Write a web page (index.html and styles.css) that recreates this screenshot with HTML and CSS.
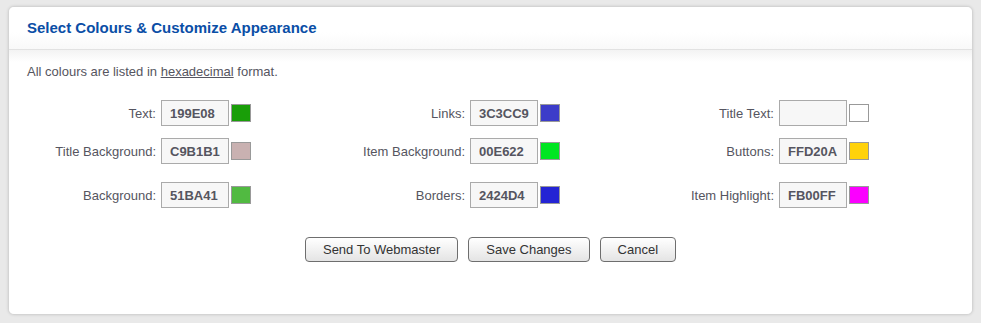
FILE: index.html
```html
<!DOCTYPE html>
<html lang="en">
<head>
    <meta charset="UTF-8">
    <meta name="viewport" content="width=device-width, initial-scale=1.0">
    <title>Select Colours &amp; Customize Appearance</title>
    <link rel="stylesheet" href="styles.css">
</head>
<body>
    <div class="panel">
        <div class="panel-header">
            <h1>Select Colours &amp; Customize Appearance</h1>
        </div>

        <div class="panel-body">
            <p class="note">All colours are listed in <a href="#">hexadecimal</a> format.</p>

            <div class="field-row">
                <div class="field">
                    <label for="textColour">Text:</label>
                    <input type="text" id="textColour" value="199E08">
                    <span class="swatch" style="background-color: #199E08;"></span>
                </div>
                <div class="field">
                    <label for="linkColour">Links:</label>
                    <input type="text" id="linkColour" value="3C3CC9">
                    <span class="swatch" style="background-color: #3C3CC9;"></span>
                </div>
                <div class="field">
                    <label for="titleTextColour">Title Text:</label>
                    <input type="text" id="titleTextColour" value="">
                    <span class="swatch" style="background-color: #FFFFFF;"></span>
                </div>
            </div>

            <div class="field-row">
                <div class="field">
                    <label for="titleBgColour">Title Background:</label>
                    <input type="text" id="titleBgColour" value="C9B1B1">
                    <span class="swatch" style="background-color: #C9B1B1;"></span>
                </div>
                <div class="field">
                    <label for="itemBgColour">Item Background:</label>
                    <input type="text" id="itemBgColour" value="00E622">
                    <span class="swatch" style="background-color: #00E622;"></span>
                </div>
                <div class="field">
                    <label for="buttonColour">Buttons:</label>
                    <input type="text" id="buttonColour" value="FFD20A">
                    <span class="swatch" style="background-color: #FFD20A;"></span>
                </div>
            </div>

            <div class="field-row field-row-last">
                <div class="field">
                    <label for="bgColour">Background:</label>
                    <input type="text" id="bgColour" value="51BA41">
                    <span class="swatch" style="background-color: #51BA41;"></span>
                </div>
                <div class="field">
                    <label for="borderColour">Borders:</label>
                    <input type="text" id="borderColour" value="2424D4">
                    <span class="swatch" style="background-color: #2424D4;"></span>
                </div>
                <div class="field">
                    <label for="highlightColour">Item Highlight:</label>
                    <input type="text" id="highlightColour" value="FB00FF">
                    <span class="swatch" style="background-color: #FB00FF;"></span>
                </div>
            </div>

            <div class="button-group">
                <button class="button">Send To Webmaster</button>
                <button class="button">Save Changes</button>
                <button class="button">Cancel</button>
            </div>
        </div>
    </div>
</body>
</html>
```

FILE: styles.css
```css
:root {
    --text-color: #555560;
    --title-color: #0a4ea6;
    --line-color: #e2e2e2;
}

body {
    margin: 0;
    padding: 6px 8px 8px 8px;
    background-color: #e9e9e9;
    font-family: 'Liberation Sans', Arial, sans-serif;
    font-size: 13px;
    color: var(--text-color);
}

.panel {
    background-color: white;
    border: 1px solid #d4d4d4;
    border-radius: 6px;
    box-shadow: 0 0 3px rgba(0,0,0,0.12), inset 0 0 0 1px #f4f4f4;
    overflow: hidden;
}

.panel-header {
    height: 42px;
    padding: 0 18px;
    border-bottom: 1px solid var(--line-color);
    background: linear-gradient(to bottom, #ffffff 60%, #f9f9f9);
}

h1 {
    margin: 0;
    line-height: 42px;
    font-size: 15px;
    font-weight: bold;
    color: var(--title-color);
}

.panel-body {
    padding: 14px 18px 52px 18px;
    background: linear-gradient(to bottom, #f3f3f3, #ffffff 12px);
}

.note {
    margin: 0 0 21px 0;
    line-height: 15px;
}

.note a {
    color: var(--text-color);
}

.field-row {
    display: grid;
    grid-template-columns: repeat(3, 309px);
    margin-bottom: 12px;
}

.field-row-last {
    margin-top: 18px;
}

.field {
    display: flex;
    align-items: center;
}

.field label {
    width: 129px;
    margin-right: 5px;
    text-align: right;
}

.field input {
    box-sizing: border-box;
    width: 68px;
    height: 26px;
    padding: 0 8px;
    border: 1px solid #aaaaaa;
    background-color: #f7f7f7;
    font-family: inherit;
    font-size: 13px;
    font-weight: bold;
    color: var(--text-color);
}

.swatch {
    box-sizing: border-box;
    width: 20px;
    height: 18px;
    margin-left: 2px;
    border: 1px solid #999999;
}

.button-group {
    display: flex;
    justify-content: center;
    gap: 10px;
    margin-top: 29px;
}

.button {
    height: 25px;
    padding: 0 17px;
    border: 1px solid #6e6e6e;
    border-radius: 4px;
    background: linear-gradient(to bottom, #ffffff, #e4e4e4);
    font-family: inherit;
    font-size: 13px;
    color: #333333;
    cursor: pointer;
}
```
